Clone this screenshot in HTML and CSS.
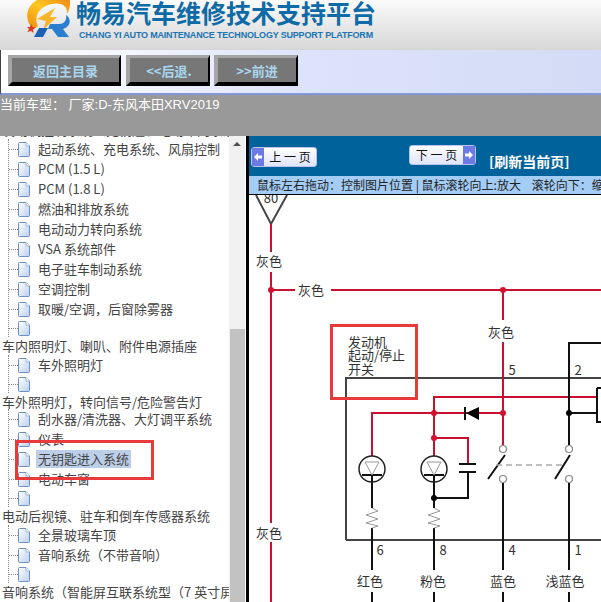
FILE: index.html
```html
<!DOCTYPE html>
<html lang="zh-CN">
<head>
  <meta charset="UTF-8" />
  <title>畅易汽车维修技术支持平台</title>
  <link rel="stylesheet" href="styles.css">
</head>
<body>
  <svg class="defs" width="0" height="0">
    <defs>
      <linearGradient id="docFill" x1="0" y1="0" x2="1" y2="1">
        <stop offset="0" stop-color="#ffffff"/>
        <stop offset="1" stop-color="#bcd0ee"/>
      </linearGradient>
      <linearGradient id="ringFill" x1="0" y1="1" x2="1" y2="0">
        <stop offset="0" stop-color="#f08a10"/>
        <stop offset="0.5" stop-color="#fcc820"/>
        <stop offset="1" stop-color="#ee8412"/>
      </linearGradient>
      <symbol id="doc" viewBox="0 0 12 15">
        <path d="M0.5 1.5 Q0.5 0.5 1.5 0.5 H8 L11.5 4 V13.5 Q11.5 14.5 10.5 14.5 H1.5 Q0.5 14.5 0.5 13.5 Z" fill="url(#docFill)" stroke="#6f8fbe"/>
        <path d="M8 0.5 V4 H11.5" fill="#fff" stroke="#8eaad2" stroke-width="0.8"/>
      </symbol>
    </defs>
  </svg>

  <header class="banner">
    <svg class="logo" width="50" height="40" viewBox="0 0 50 40">
      <path d="M9 29 C-3 16 5 1 20 -3 L45 -3 C47 3 46 9 43 14 C44 5 36 2 28 4 C16 6 9 16 14 26 Z" fill="url(#ringFill)"/>
      <path d="M13 19 L31 8 L26 17 L33 17 L19 30 L22 21 Z" fill="#f8b52a"/>
      <path d="M7 24 L8.500 27 L12 27.500 L9 29.500 L9.500 33 L7 31 L3.500 32 L5 29 L3 27 L6 27 Z" fill="#dd3a22"/>
      <path d="M15 28 H24 L19 37 H10 Z" fill="#1a62b4"/>
      <path d="M26 24 H35 C41 24 43 19 42 15 C47 18 48 26 39 29 L45 37 H34 L28 29 H24 Z" fill="#2a7fd0"/>
    </svg>
    <div class="brand">
      <h1 class="brand-title">畅易汽车维修技术支持平台</h1>
      <p class="brand-sub">CHANG YI AUTO MAINTENANCE TECHNOLOGY SUPPORT PLATFORM</p>
    </div>
  </header>

  <nav class="toolbar">
    <a class="tool-btn tool-btn-home">返回主目录</a>
    <a class="tool-btn tool-btn-back">&lt;&lt;后退.</a>
    <a class="tool-btn tool-btn-next">&gt;&gt;前进</a>
  </nav>

  <div class="status">当前车型： 厂家:D-东风本田XRV2019</div>

  <main class="main">
    <aside class="tree">
      <div class="tree-list">
        <div class="top-row">发动机控制系统（无钥匙、电动车门系统</div>
        <ul class="group">
          <li><i class="branch"></i><svg class="doc"><use href="#doc"/></svg><span>起动系统、充电系统、风扇控制</span></li>
          <li><i class="branch"></i><svg class="doc"><use href="#doc"/></svg><span>PCM (1.5 L)</span></li>
          <li><i class="branch"></i><svg class="doc"><use href="#doc"/></svg><span>PCM (1.8 L)</span></li>
          <li><i class="branch"></i><svg class="doc"><use href="#doc"/></svg><span>燃油和排放系统</span></li>
          <li><i class="branch"></i><svg class="doc"><use href="#doc"/></svg><span>电动动力转向系统</span></li>
          <li><i class="branch"></i><svg class="doc"><use href="#doc"/></svg><span>VSA 系统部件</span></li>
          <li><i class="branch"></i><svg class="doc"><use href="#doc"/></svg><span>电子驻车制动系统</span></li>
          <li><i class="branch"></i><svg class="doc"><use href="#doc"/></svg><span>空调控制</span></li>
          <li><i class="branch"></i><svg class="doc"><use href="#doc"/></svg><span>取暖/空调，后窗除雾器</span></li>
          <li class="empty"><i class="branch"></i><svg class="doc"><use href="#doc"/></svg></li>
        </ul>
        <div class="top-row">车内照明灯、喇叭、附件电源插座</div>
        <ul class="group">
          <li><i class="branch"></i><svg class="doc"><use href="#doc"/></svg><span>车外照明灯</span></li>
          <li class="empty"><i class="branch"></i><svg class="doc"><use href="#doc"/></svg></li>
        </ul>
        <div class="top-row top-row-tight">车外照明灯，转向信号/危险警告灯</div>
        <ul class="group">
          <li><i class="branch"></i><svg class="doc"><use href="#doc"/></svg><span>刮水器/清洗器、大灯调平系统</span></li>
          <li><i class="branch"></i><svg class="doc"><use href="#doc"/></svg><span>仪表</span></li>
          <li><i class="branch"></i><svg class="doc"><use href="#doc"/></svg><span class="selected">无钥匙进入系统</span></li>
          <li><i class="branch"></i><svg class="doc"><use href="#doc"/></svg><span>电动车窗</span></li>
          <li class="empty"><i class="branch"></i><svg class="doc"><use href="#doc"/></svg></li>
        </ul>
        <div class="top-row">电动后视镜、驻车和倒车传感器系统</div>
        <ul class="group">
          <li><i class="branch"></i><svg class="doc"><use href="#doc"/></svg><span>全景玻璃车顶</span></li>
          <li><i class="branch"></i><svg class="doc"><use href="#doc"/></svg><span>音响系统（不带音响）</span></li>
          <li class="empty"><i class="branch"></i><svg class="doc"><use href="#doc"/></svg></li>
        </ul>
        <div class="top-row">音响系统（智能屏互联系统型（7 英寸屏</div>
      </div>
      <div class="scrollbar">
        <i class="scroll-arrow"></i>
        <div class="scroll-thumb"></div>
      </div>
      <div class="mark mark-tree"></div>
    </aside>

    <section class="viewer">
      <div class="pager">
        <a class="page-btn page-btn-prev">
          <b class="page-arrow"><svg width="10" height="10" viewBox="0 0 10 10"><path d="M1 5 L5 1 V3.500 H9 V6.500 H5 V9 Z" fill="#fff"/></svg></b>
          <span class="page-label">上 一 页</span>
        </a>
        <a class="page-btn page-btn-next">
          <span class="page-label">下 一 页</span>
          <b class="page-arrow"><svg width="10" height="10" viewBox="0 0 10 10"><path d="M9 5 L5 1 V3.500 H1 V6.500 H5 V9 Z" fill="#fff"/></svg></b>
        </a>
        <a class="refresh">[刷新当前页]</a>
      </div>
      <div class="hint">鼠标左右拖动：控制图片位置 | 鼠标滚轮向上:放大&nbsp;&nbsp;&nbsp;&nbsp;滚轮向下：缩小</div>
      <div class="sheet">
        <!-- viewBox uses page coordinates -->
        <svg class="schematic" width="352" height="407" viewBox="249 195 352 407">
          <g class="wire-dark">
            <path d="M346 540 V378 H601"/>
            <path d="M346 540 H601"/>
            <path d="M256 195 L271 224 L287 195"/>
          </g>
          <g class="wire-red">
            <path d="M271 224 V252 M271 272 V523 M271 542 V602"/>
            <path d="M271 290 H295 M331 290 H601"/>
            <path d="M503 290 V320 M503 342 V445"/>
            <path d="M434 456 V397 H597"/>
            <path d="M372 456 V413 H503"/>
            <path d="M434 438 H468 V464"/>
          </g>
          <g class="wire-black">
            <path d="M601 343 H569 V445"/>
            <path d="M569 413 H597"/>
            <path d="M597 388 H601 M597 388 V422 H601"/>
            <path d="M372 476 V508 M372 528 V570 M372 592 V602"/>
            <path d="M434 476 V508 M434 528 V570 M434 592 V602"/>
            <path d="M468 472 V498 H434"/>
            <path d="M503 483 V570 M503 592 V602"/>
            <path d="M569 483 V570 M569 592 V602"/>
            <path d="M459 464 H476 M459 472 H476"/>
            <path d="M362 475 H382 M424 475 H444"/>
            <path d="M505 455 L488 479 M570 455 L555 479"/>
            <path d="M465 407 V420" stroke-width="1"/>
          </g>
          <path class="diode" d="M466 413 L479 407 V420 Z"/>
          <g class="dots-red">
            <circle cx="271" cy="290" r="3"/>
            <circle cx="503" cy="290" r="3"/>
            <circle cx="434" cy="413" r="3"/>
            <circle cx="503" cy="413" r="3"/>
            <circle cx="434" cy="438" r="3"/>
          </g>
          <g class="dots-black">
            <circle cx="569" cy="413" r="3"/>
            <circle cx="434" cy="498" r="3"/>
          </g>
          <g class="lamp">
            <circle cx="372" cy="469" r="13"/>
            <circle cx="434" cy="469" r="13"/>
          </g>
          <g class="lamp-inner">
            <path d="M365 462 H379 L372 475 Z"/>
            <path d="M427 462 H441 L434 475 Z"/>
            <path d="M372 508 L378 511 L366 515 L378 519 L366 523 L378 526 L372 528"/>
            <path d="M434 508 L440 511 L428 515 L440 519 L428 523 L440 526 L434 528"/>
          </g>
          <path class="link-dash" d="M496 465 H563"/>
          <g class="contact">
            <circle cx="503" cy="449" r="3.500"/>
            <circle cx="569" cy="449" r="3.500"/>
            <circle cx="503" cy="479" r="3.500"/>
            <circle cx="569" cy="479" r="3.500"/>
          </g>
          <g class="label">
            <text x="271" y="203">80</text>
            <text x="269" y="266">灰色</text>
            <text x="311" y="295">灰色</text>
            <text x="501" y="337">灰色</text>
            <text x="269" y="538">灰色</text>
            <text x="512" y="375">5</text>
            <text x="578" y="375">2</text>
            <text x="380" y="555">6</text>
            <text x="443" y="555">8</text>
            <text x="512" y="555">4</text>
            <text x="578" y="555">1</text>
            <text x="370" y="586">红色</text>
            <text x="433" y="586">粉色</text>
            <text x="503" y="586">蓝色</text>
            <text x="565" y="586">浅蓝色</text>
          </g>
          <g class="label label-left">
            <text x="348" y="347">发动机</text>
            <text x="348" y="360">起动/停止</text>
            <text x="348" y="374">开关</text>
          </g>
          <rect class="mark-sheet" x="331.500" y="325.500" width="85" height="73"/>
        </svg>
      </div>
    </section>
  </main>
</body>
</html>
```

FILE: styles.css
```css
* {
  box-sizing: border-box;
}
html,
body {
  margin: 0;
  padding: 0;
  height: 100%;
  overflow: hidden;
}
body {
  display: flex;
  flex-direction: column;
  font-family: "Liberation Sans", "Noto Sans CJK SC", sans-serif;
  font-size: 13px;
  background: #fff;
  color: #444;
}
.defs {
  position: absolute;
}

/* banner */
.banner {
  display: flex;
  height: 50px;
  flex: none;
  padding-left: 24px;
  background: linear-gradient(#fbfbfb, #d6d6d6);
  overflow: hidden;
}
.logo {
  flex: none;
}
.brand {
  margin-left: 2px;
}
.brand-title {
  margin: -3px 0 0;
  font-family: "Noto Sans CJK SC", sans-serif;
  font-size: 25px;
  line-height: 30px;
  font-weight: 700;
  color: #0e6ba6;
  white-space: nowrap;
}
.brand-sub {
  margin: 3px 0 0 3px;
  font-size: 9px;
  line-height: 11px;
  font-weight: 700;
  letter-spacing: -0.19px;
  color: #1b74b4;
  white-space: nowrap;
}

/* toolbar */
.toolbar {
  display: flex;
  height: 45px;
  flex: none;
  padding: 5px 0 0 7px;
  background: linear-gradient(to right, #fff 0, #f4f6fe 20%, #dde3fa 50%, #d3dbf6 100%);
  border-left: 1px solid #444;
  border-bottom: 2px solid #8398d8;
}
.tool-btn {
  display: flex;
  align-items: center;
  justify-content: center;
  height: 31px;
  background: #777;
  border-style: solid;
  border-width: 3px 2px 4px 4px;
  border-color: #a5a5a5 #000 #000 #a5a5a5;
  font-family: "Noto Sans CJK SC", sans-serif;
  font-size: 13px;
  font-weight: 700;
  color: #a9d6ee;
}
.tool-btn-home {
  width: 113px;
}
.tool-btn-back {
  width: 84px;
  margin-left: 5px;
}
.tool-btn-next {
  width: 84px;
  margin-left: 4px;
}

.status {
  height: 41px;
  flex: none;
  padding-top: 1px;
  background: #999;
  color: #fff;
  font-size: 13px;
  line-height: 18px;
  white-space: nowrap;
}

.main {
  display: flex;
  flex: 1;
  min-height: 0;
}

/* tree */
.tree {
  position: relative;
  display: flex;
  width: 246px;
  flex: none;
  overflow: hidden;
  background: #fff;
}
.tree-list {
  width: 229px;
  flex: none;
  overflow: hidden;
  margin-top: -15px;
  white-space: nowrap;
  font-family: "Noto Sans CJK SC", sans-serif;
}
.top-row {
  height: 18px;
  padding-left: 2px;
  line-height: 18px;
}
.top-row-tight {
  height: 16px;
}
.group {
  list-style: none;
  margin: 0 0 0 8px;
  padding: 0;
  border-left: 1px dotted #888;
}
.group li {
  display: flex;
  align-items: center;
  height: 20px;
}
.group li.empty {
  height: 18px;
}
.branch {
  width: 9px;
  flex: none;
  border-top: 1px dotted #888;
}
.doc {
  width: 12px;
  height: 15px;
  flex: none;
}
.group span {
  margin-left: 8px;
  line-height: 18px;
}
.group span.selected {
  margin-left: 6px;
  padding: 0 2px;
  background: #bccfe8;
}
.scrollbar {
  display: flex;
  flex-direction: column;
  align-items: center;
  width: 16px;
  flex: none;
  background: #f0f0f0;
}
.scroll-arrow {
  margin-top: 6px;
  border-left: 4px solid transparent;
  border-right: 4px solid transparent;
  border-bottom: 4px solid #505050;
}
.scroll-thumb {
  align-self: stretch;
  flex: 1;
  margin: 183px 0 0 1px;
  background: #c2c2c2;
}
.mark-tree {
  position: absolute;
  left: 15px;
  top: 304px;
  width: 139px;
  height: 40px;
  border: 3px solid #e8393b;
}

/* viewer */
.viewer {
  display: flex;
  flex-direction: column;
  flex: 1;
  min-width: 0;
  border-left: 3px solid #000;
}
.pager {
  display: flex;
  height: 40px;
  flex: none;
  padding-left: 2px;
  background: #00629a;
}
.page-btn {
  display: flex;
  align-items: center;
  height: 20px;
  border-radius: 3px;
  border: 1px solid #b8c4f0;
  background: linear-gradient(#fff, #dfe4fa);
  color: #111;
}
.page-btn-prev {
  width: 66px;
  margin-top: 11px;
}
.page-btn-next {
  width: 67px;
  margin: 9px 0 0 92px;
  justify-content: flex-end;
}
.page-arrow {
  display: flex;
  align-items: center;
  justify-content: center;
  width: 12px;
  height: 18px;
  flex: none;
  background: #6b7ae4;
}
.page-label {
  flex: 1;
  text-align: center;
  font-family: "Noto Sans CJK SC", sans-serif;
  font-size: 12px;
  line-height: 18px;
}
.refresh {
  margin: 15px 0 0 13px;
  font-family: "Noto Sans CJK SC", sans-serif;
  font-size: 14px;
  line-height: 20px;
  font-weight: 700;
  color: #fff;
}
.hint {
  height: 19px;
  flex: none;
  overflow: hidden;
  padding-left: 8px;
  background: #a4cdf5;
  border-bottom: 1px solid #000;
  font-family: "Noto Sans CJK SC", sans-serif;
  font-size: 12px;
  line-height: 18px;
  color: #222;
  white-space: nowrap;
}
.sheet {
  flex: 1;
  min-height: 0;
  overflow: hidden;
  background: #fff;
}
.schematic {
  display: block;
}
.schematic path,
.schematic circle,
.schematic rect {
  fill: none;
}
.wire-dark path {
  stroke: #444;
  stroke-width: 2;
}
.wire-red path {
  stroke: #c9102f;
  stroke-width: 2;
}
.wire-black path {
  stroke: #111;
  stroke-width: 2;
}
.schematic .diode {
  fill: #000;
}
.schematic .dots-red circle {
  fill: #d5102f;
}
.schematic .dots-black circle {
  fill: #000;
}
.lamp circle {
  stroke: #222;
  stroke-width: 1.5;
}
.lamp-inner path {
  stroke: #999;
  stroke-width: 1;
}
.link-dash {
  stroke: #aaa;
  stroke-width: 1.5;
  stroke-dasharray: 6 4;
}
.schematic .contact circle {
  fill: #fff;
  stroke: #888;
  stroke-width: 1.2;
}
.label text {
  font-family: "Noto Sans CJK SC", sans-serif;
  font-size: 13px;
  fill: #333;
  text-anchor: middle;
}
.label-left text {
  text-anchor: start;
}
.schematic .mark-sheet {
  stroke: #e8393b;
  stroke-width: 3;
}
```
